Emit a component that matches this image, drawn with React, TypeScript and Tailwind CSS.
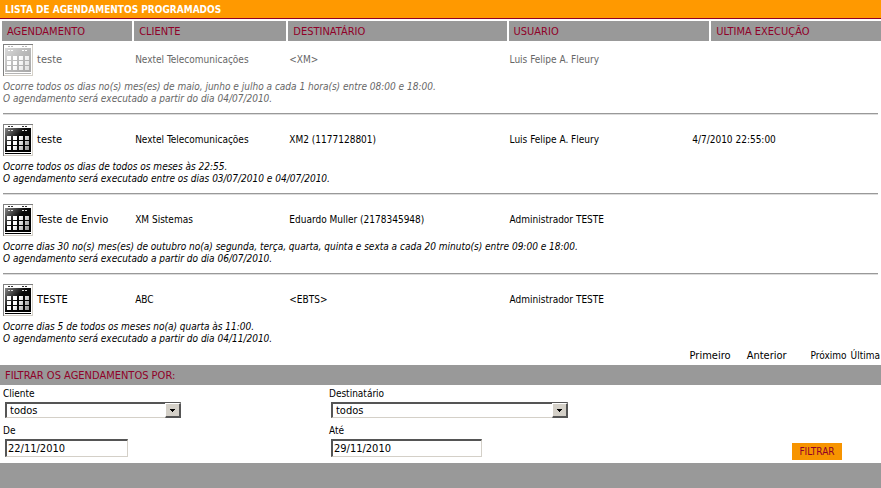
import { useId } from "react";

type Schedule = {
  name: string;
  client: string;
  recipient: string;
  user: string;
  lastRun: string;
  recurrence: string;
  period: string;
  inactive?: boolean;
};

const schedules: Schedule[] = [
  {
    name: "teste",
    client: "Nextel Telecomunicações",
    recipient: "<XM>",
    user: "Luis Felipe A. Fleury",
    lastRun: "",
    recurrence:
      "Ocorre todos os dias no(s) mes(es) de maio, junho e julho a cada 1 hora(s) entre 08:00 e 18:00.",
    period: "O agendamento será executado a partir do dia 04/07/2010.",
    inactive: true,
  },
  {
    name: "teste",
    client: "Nextel Telecomunicações",
    recipient: "XM2 (1177128801)",
    user: "Luis Felipe A. Fleury",
    lastRun: "4/7/2010 22:55:00",
    recurrence: "Ocorre todos os dias de todos os meses às 22:55.",
    period: "O agendamento será executado entre os dias 03/07/2010 e 04/07/2010.",
  },
  {
    name: "Teste de Envio",
    client: "XM Sistemas",
    recipient: "Eduardo Muller (2178345948)",
    user: "Administrador TESTE",
    lastRun: "",
    recurrence:
      "Ocorre dias 30 no(s) mes(es) de outubro no(a) segunda, terça, quarta, quinta e sexta a cada 20 minuto(s) entre 09:00 e 18:00.",
    period: "O agendamento será executado a partir do dia 06/07/2010.",
  },
  {
    name: "TESTE",
    client: "ABC",
    recipient: "<EBTS>",
    user: "Administrador TESTE",
    lastRun: "",
    recurrence: "Ocorre dias 5 de todos os meses no(a) quarta às 11:00.",
    period: "O agendamento será executado a partir do dia 04/11/2010.",
  },
];

function CalendarIcon({ faded }: { faded?: boolean }) {
  const id = useId();
  const gradient = `${id}-body`;
  const cells = `${id}-cells`;
  return (
    <svg
      width="30"
      height="32"
      viewBox="0 0 30 32"
      shapeRendering="crispEdges"
      className="block shrink-0"
      aria-hidden="true"
    >
      <defs>
        <linearGradient id={gradient} x1="0" y1="0" x2="1" y2="0.8">
          <stop offset="0" stopColor={faded ? "#dadada" : "#888888"} />
          <stop offset="0.5" stopColor={faded ? "#bcbcbc" : "#080808"} />
          <stop offset="1" stopColor={faded ? "#aaaaaa" : "#000000"} />
        </linearGradient>
        <linearGradient id={cells} gradientUnits="userSpaceOnUse" x1="4" y1="12" x2="26" y2="27">
          <stop offset="0.4" stopColor="#ffffff" />
          <stop offset="1" stopColor={faded ? "#dddddd" : "#888888"} />
        </linearGradient>
      </defs>
      <rect width="30" height="32" fill="#d4d0c8" />
      <path d="M0 0H30V1H1V32H0Z" fill="#808080" />
      <rect x="1" y="1" width="28" height="30" fill="#ffffff" />
      <rect x="2" y="4" width="26" height="24" fill={`url(#${gradient})`} />
      <rect x="2" y="29" width="26" height="1" fill={faded ? "#b4b4b4" : "#000000"} />
      {[5, 8, 19, 22].map((x) => (
        <g key={x}>
          <rect x={x} y="2" width="2" height="1" fill={faded ? "#b8b8b8" : "#333333"} />
          <rect x={x} y="6" width="2" height="1" fill={faded ? "#ffffff" : "#dddddd"} />
        </g>
      ))}
      {[12, 17, 22].map((y) =>
        [4, 10, 16, 22].map((x) => (
          <rect key={`${x}-${y}`} x={x} y={y} width="4" height="4" fill={`url(#${cells})`} />
        )),
      )}
    </svg>
  );
}

function ScheduleRows({ item, last }: { item: Schedule; last: boolean }) {
  return (
    <tbody className={item.inactive ? "text-[#666666]" : "text-black"}>
      <tr className="h-[38px]">
        <td className="pl-[3px]">
          <div className="flex items-center gap-1 text-[11px] leading-[12px] whitespace-nowrap">
            <CalendarIcon faded={item.inactive} />
            {item.name}
          </div>
        </td>
        <td className="pl-[3px]">{item.client}</td>
        <td className="pl-[3px]">{item.recipient}</td>
        <td className="pl-[3px]">{item.user}</td>
        <td className="pl-[3px]">
          <div className="-ml-5">{item.lastRun}</div>
        </td>
      </tr>
      <tr>
        <td colSpan={5} className="px-[3px] pt-0.5">
          <p className="italic">
            {item.recurrence}
            <br />
            {item.period}
          </p>
          {last ? null : (
            <hr className="mt-2 mb-1.5 border-t border-b border-t-[#999999] border-b-[#dddddd]" />
          )}
        </td>
      </tr>
    </tbody>
  );
}

function SelectField({ id, label, width }: { id: string; label: string; width: string }) {
  return (
    <div className="flex flex-col">
      <label htmlFor={id} className="mb-0.5">
        {label}
      </label>
      <div className={`relative ml-0.5 ${width}`}>
        <select
          id={id}
          className="block h-4 w-full appearance-none rounded-none border border-t-2 border-l-2 border-[#d4d0c8] border-t-[#555555] border-l-[#555555] bg-white pl-[3px] text-[11px] leading-[12px] text-black"
        >
          <option>todos</option>
        </select>
        <span className="pointer-events-none absolute top-px right-0 flex h-[15px] w-4 items-center justify-center border border-r-2 border-b-2 border-white border-r-[#555555] border-b-[#555555] bg-[#d4d0c8]">
          <svg width="5" height="3" viewBox="0 0 5 3" shapeRendering="crispEdges" aria-hidden="true">
            <path d="M0 0H5V1H4V2H3V3H2V2H1V1H0Z" fill="#000000" />
          </svg>
        </span>
      </div>
    </div>
  );
}

function DateField({ id, label, value, width }: { id: string; label: string; value: string; width: string }) {
  return (
    <div className="flex flex-col">
      <label htmlFor={id} className="mb-0.5">
        {label}
      </label>
      <input
        id={id}
        type="text"
        defaultValue={value}
        className={`ml-0.5 h-[18px] rounded-none border border-t-2 border-l-2 border-[#d4d0c8] border-t-[#555555] border-l-[#555555] bg-white pl-px text-[11px] leading-[14px] text-black ${width}`}
      />
    </div>
  );
}

const columns = [
  { title: "AGENDAMENTO", width: "w-[15%]" },
  { title: "CLIENTE", width: "w-[17.5%]" },
  { title: "DESTINATÁRIO", width: "w-[25%]" },
  { title: "USUARIO", width: "w-[23%]" },
  { title: "ULTIMA EXECUÇÃO", width: "w-[19.5%]" },
];

export default function App() {
  return (
    <main className="bg-white font-['DejaVu_Sans_Condensed','DejaVu_Sans',sans-serif] text-[10px] leading-[12px] text-black">
      <h1 className="border-b border-[#900028] bg-[#ff9900] px-[5px] pt-1 pb-0.5 text-[10px] leading-[12px] font-bold text-white">
        LISTA DE AGENDAMENTOS PROGRAMADOS
      </h1>

      <table className="mt-0.5 w-full table-fixed border-separate border-spacing-0 text-left">
        <thead>
          <tr>
            {columns.map((column) => (
              <th
                key={column.title}
                scope="col"
                className={`h-5 border-l-2 border-white bg-[#999999] pt-0.5 pl-[5px] text-[11px] leading-[12px] font-normal whitespace-nowrap text-[#900028] ${column.width}`}
              >
                {column.title}
              </th>
            ))}
          </tr>
        </thead>
        {schedules.map((item, index) => (
          <ScheduleRows key={index} item={item} last={index === schedules.length - 1} />
        ))}
      </table>

      <nav className="mt-[5px] flex justify-end gap-6 pr-px pb-[3px]">
        <div className="flex w-[97px] justify-between text-[11px] leading-[12px]">
          <a href="#primeiro">Primeiro</a>
          <a href="#anterior">Anterior</a>
        </div>
        <div className="flex gap-1">
          <a href="#proximo">Próximo</a>
          <a href="#ultima">Última</a>
        </div>
      </nav>

      <form onSubmit={(event) => event.preventDefault()}>
        <h2 className="bg-[#999999] px-[5px] pt-[5px] pb-[3px] text-[11px] leading-[12px] text-[#900028]">
          FILTRAR OS AGENDAMENTOS POR:
        </h2>
        <div className="flex pt-[3px] pb-1.5">
          <div className="flex w-[37%] flex-col gap-[7px] pl-[3px]">
            <SelectField id="cliente" label="Cliente" width="w-44" />
            <DateField id="de" label="De" value="22/11/2010" width="w-[123px]" />
          </div>
          <div className="flex flex-col gap-[7px] pl-[3px]">
            <SelectField id="destinatario" label="Destinatário" width="w-[237px]" />
            <DateField id="ate" label="Até" value="29/11/2010" width="w-[151px]" />
          </div>
          <button
            type="submit"
            className="mr-[39px] -mb-[3px] ml-auto h-[17px] w-[50px] self-end bg-[#f79400] text-[10px] leading-[12px] text-[#900028]"
          >
            FILTRAR
          </button>
        </div>
      </form>

      <footer className="h-[25px] bg-[#999999]" />
    </main>
  );
}
